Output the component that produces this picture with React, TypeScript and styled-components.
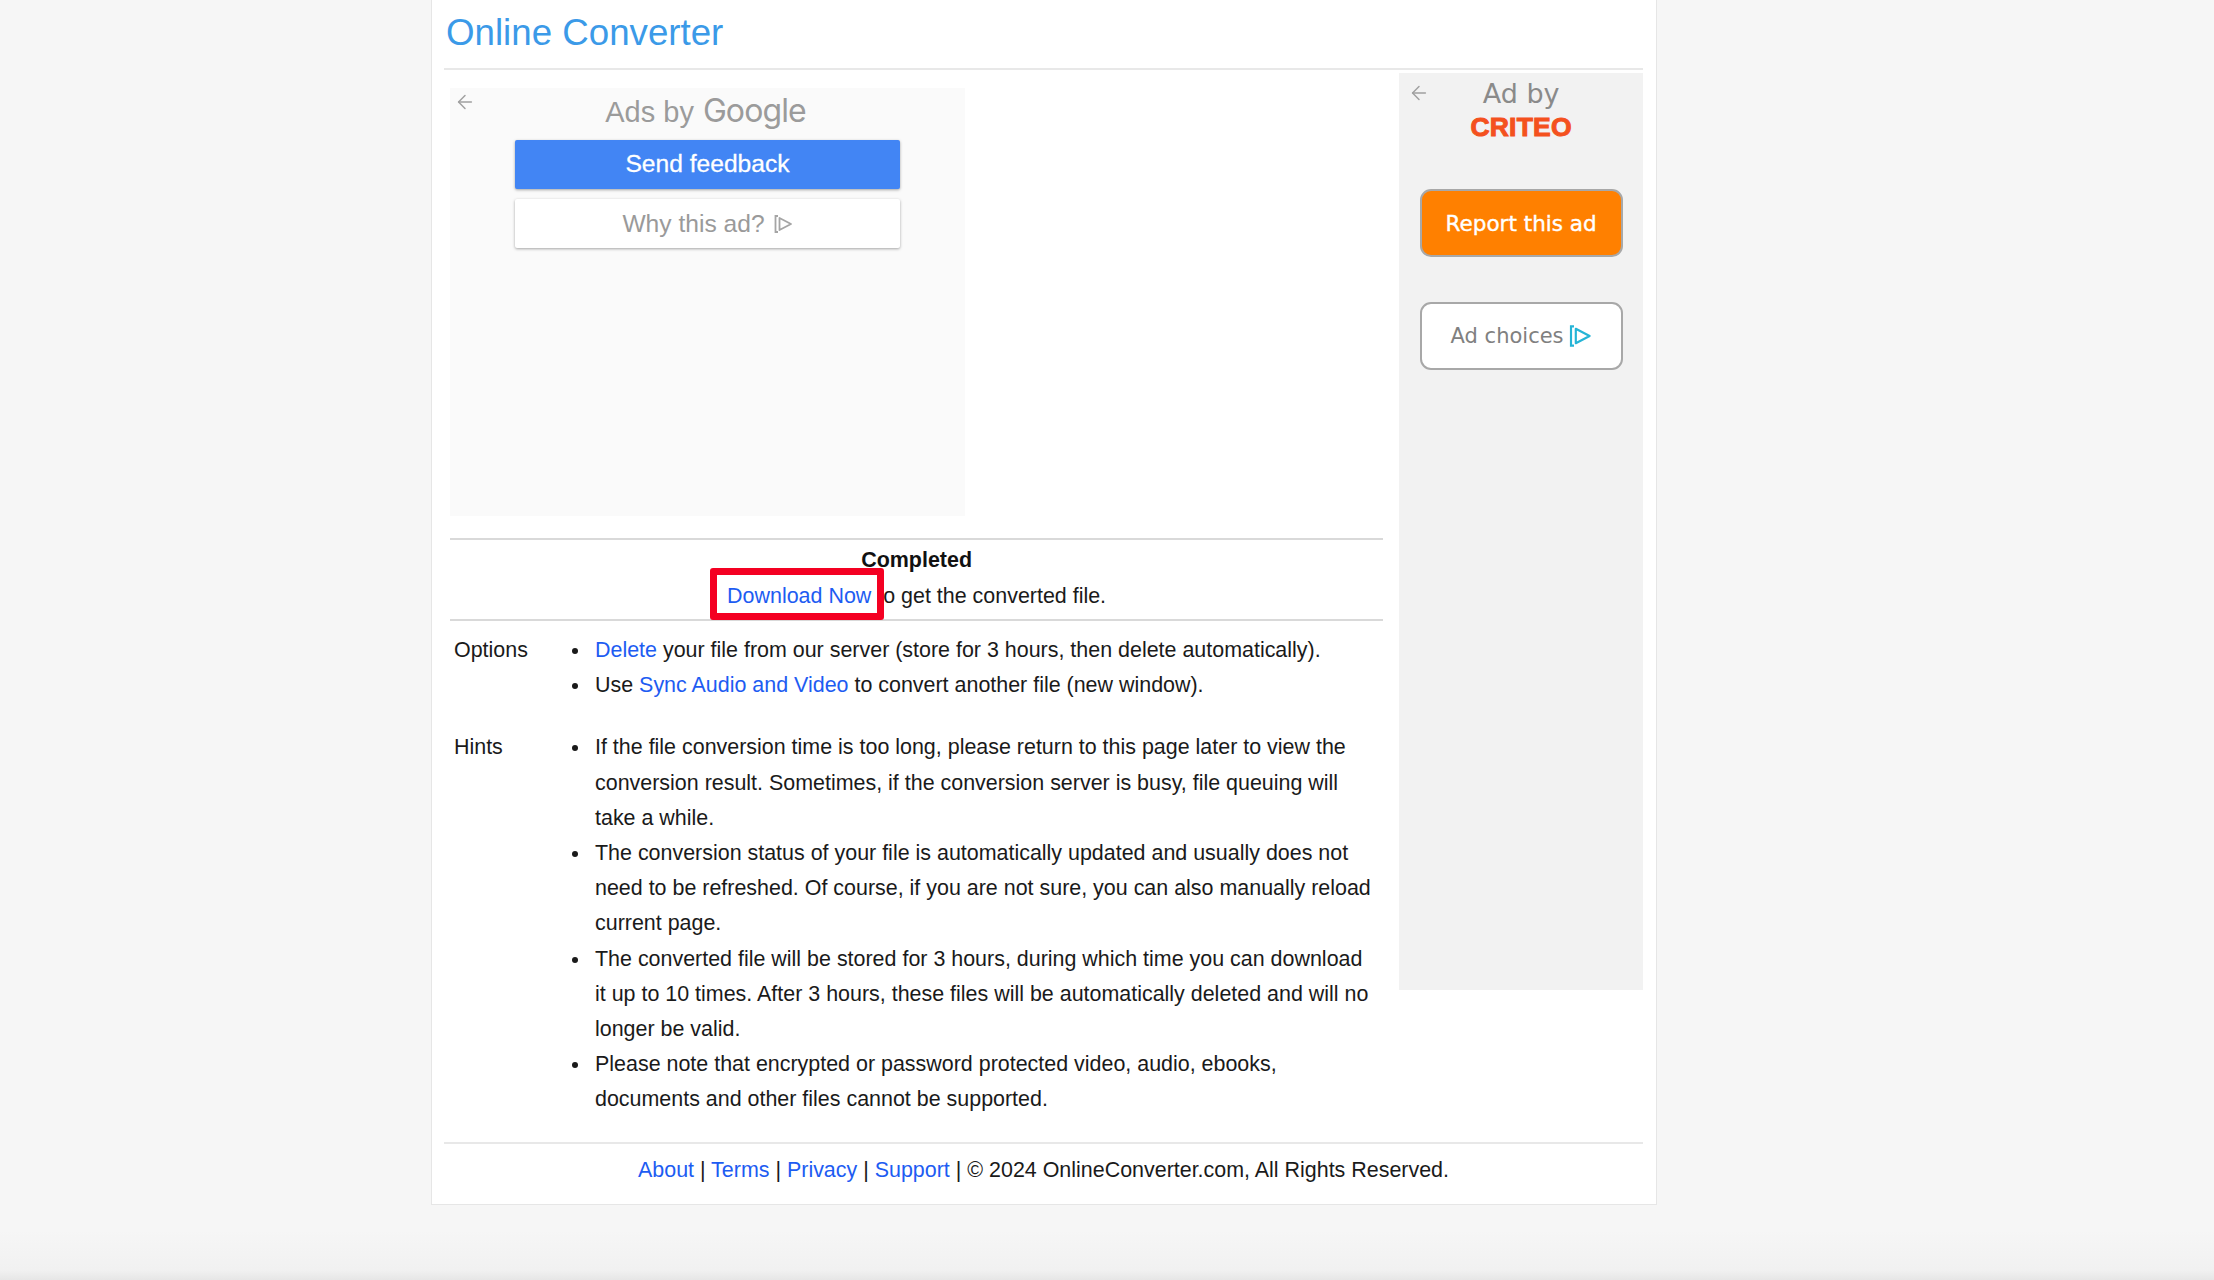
import * as React from "react";
import styled, { createGlobalStyle } from "styled-components";
import { ArrowLeft } from "lucide-react";

const GlobalStyle = createGlobalStyle`
  html, body {
    margin: 0;
    padding: 0;
  }
  body {
    height: 1280px;
    overflow: hidden;
    background: linear-gradient(#f6f6f6 0, #f6f6f6 1230px, #f1f1f1 1270px, #e6e6e6 1280px);
    font-family: "Liberation Sans", Arial, sans-serif;
    color: #1a1a1a;
  }
  a {
    color: #1d5cf2;
    text-decoration: none;
  }
`;

const Card = styled.div`
  box-sizing: border-box;
  width: 1226px;
  height: 1205px;
  margin-left: 431px;
  padding: 0 13px 0 12px;
  background: #fff;
  border: 1px solid #e6e6e6;
  border-top: 0;
`;

const Header = styled.header`
  height: 68px;
  border-bottom: 2px solid #e8e8e8;
`;

const Title = styled.h1`
  margin: 0;
  padding: 12px 0 0 2px;
  font-size: 36.7px;
  line-height: 42px;
  font-weight: 400;
  color: #3b9ae8;
`;

const Columns = styled.div`
  display: flex;
  align-items: flex-start;
  gap: 16px;
  padding-left: 6px;
  height: 1072px;
`;

const Main = styled.main`
  width: 934px;
  padding-top: 18px;
`;

const GoogleAd = styled.section`
  position: relative;
  box-sizing: border-box;
  width: 515px;
  height: 428px;
  padding-top: 4px;
  background: #fafafa;
  display: flex;
  flex-direction: column;
  align-items: center;
`;

const BackIcon = styled(ArrowLeft)`
  position: absolute;
  top: 3px;
  left: 4px;
  color: #a0a0a0;
`;

const SideBackIcon = styled(BackIcon)`
  top: 9px;
  left: 9px;
`;

const AdsBy = styled.div`
  display: flex;
  align-items: baseline;
  gap: 9px;
  height: 48px;
  margin-right: 4px;
  font-size: 29px;
  line-height: 38px;
  color: #9b9b9b;
`;

const GoogleWord = styled.span`
  font-family: Inter, sans-serif;
  font-size: 32px;
  font-weight: 400;
  letter-spacing: -0.9px;
`;

const FeedbackButton = styled.div`
  width: 385px;
  height: 49px;
  border-radius: 2px;
  background: #4285f4;
  box-shadow: 0 1px 3px rgba(0, 0, 0, 0.35);
  color: #fff;
  font-size: 24.6px;
  line-height: 48px;
  text-align: center;
  -webkit-text-stroke: 0.3px #fff;
`;

const WhyButton = styled.div`
  display: flex;
  align-items: center;
  justify-content: center;
  gap: 8px;
  width: 385px;
  height: 49px;
  margin-top: 10px;
  border-radius: 2px;
  background: #fff;
  box-shadow: 0 1px 3px rgba(0, 0, 0, 0.35);
  color: #9a9a9a;
  font-size: 24.6px;
`;

const Status = styled.section`
  margin-top: 22px;
  height: 79px;
  border-top: 2px solid #d9d9d9;
  border-bottom: 2px solid #d9d9d9;
  text-align: center;
  font-size: 21.45px;
  line-height: 35px;
`;

const StatusTitle = styled.div`
  height: 36px;
  padding-top: 3px;
  box-sizing: content-box;
  font-weight: 700;
  color: #111;
`;

const Highlighted = styled.a`
  position: relative;
  &::after {
    content: "";
    position: absolute;
    left: -17px;
    right: -13px;
    top: -16px;
    bottom: -12px;
    border: 7px solid #f40022;
    border-radius: 3px;
  }
`;

const InfoRow = styled.div<{ $gap?: number }>`
  display: flex;
  margin-top: ${(p) => p.$gap || 0}px;
  font-size: 21.45px;
  line-height: 35.2px;
`;

const InfoLabel = styled.div`
  width: 137px;
  padding-left: 4px;
  flex-shrink: 0;
`;

const InfoList = styled.ul`
  margin: 0;
  padding: 0 9px 0 0;
  list-style: disc;
  flex: 1;
  li {
    padding-left: 4px;
  }
`;

const Sidebar = styled.aside`
  position: relative;
  box-sizing: border-box;
  width: 244px;
  height: 917px;
  margin-top: 3px;
  padding-top: 3px;
  background: #f2f2f2;
  display: flex;
  flex-direction: column;
  align-items: center;
  font-family: "DejaVu Sans", sans-serif;
`;

const AdBy = styled.div`
  font-size: 27px;
  line-height: 36px;
  color: #8a8a8a;
`;

const Criteo = styled.div`
  margin-top: 3px;
  font-family: "Liberation Sans", sans-serif;
  font-weight: 700;
  font-size: 26.5px;
  line-height: 24px;
  letter-spacing: 0.2px;
  color: #f4511e;
  -webkit-text-stroke: 1px #f4511e;
`;

const SideButton = styled.div<{ $accent?: boolean }>`
  box-sizing: border-box;
  display: flex;
  align-items: center;
  justify-content: center;
  gap: 4px;
  width: 203px;
  height: 68px;
  margin-top: ${(p) => (p.$accent ? 50 : 45)}px;
  border: 2px solid #a8a8a8;
  border-radius: 11px;
  background: ${(p) => (p.$accent ? "#ff8000" : "#fff")};
  color: ${(p) => (p.$accent ? "#fff" : "#808080")};
  font-size: ${(p) => (p.$accent ? 21.5 : 21)}px;
  -webkit-text-stroke: ${(p) => (p.$accent ? "0.4px #fff" : "0")};
`;

const Footer = styled.footer`
  border-top: 2px solid #e8e8e8;
  padding-top: 9px;
  text-align: center;
  font-size: 21.45px;
  line-height: 35px;
`;

const PlayMark = ({ color, size }: { color: string; size: number }) => (
  <svg width={size} height={size} viewBox="0 0 20 20" fill="none" stroke={color} strokeWidth="1.8">
    <path d="M5 2H2.5v16H5" />
    <path d="M6.5 4l11.5 6-11.5 6z" strokeLinejoin="round" />
  </svg>
);

const App = () => {
  return (
    <>
      <GlobalStyle />
      <Card>
        <Header>
          <Title>Online Converter</Title>
        </Header>
        <Columns>
          <Main>
            <GoogleAd>
              <BackIcon size={22} strokeWidth={1.6} />
              <AdsBy>
                Ads by <GoogleWord>Google</GoogleWord>
              </AdsBy>
              <FeedbackButton>Send feedback</FeedbackButton>
              <WhyButton>
                Why this ad? <PlayMark color="#a5a5a5" size={20} />
              </WhyButton>
            </GoogleAd>
            <Status>
              <StatusTitle>Completed</StatusTitle>
              <div>
                <Highlighted href="#">Download Now</Highlighted> to get the converted file.
              </div>
            </Status>
            <InfoRow $gap={12}>
              <InfoLabel>Options</InfoLabel>
              <InfoList>
                <li>
                  <a href="#">Delete</a> your file from our server (store for 3 hours, then delete automatically).
                </li>
                <li>
                  Use <a href="#">Sync Audio and Video</a> to convert another file (new window).
                </li>
              </InfoList>
            </InfoRow>
            <InfoRow $gap={27}>
              <InfoLabel>Hints</InfoLabel>
              <InfoList>
                <li>
                  If the file conversion time is too long, please return to this page later to view the conversion
                  result. Sometimes, if the conversion server is busy, file queuing will take a while.
                </li>
                <li>
                  The conversion status of your file is automatically updated and usually does not need to be
                  refreshed. Of course, if you are not sure, you can also manually reload current page.
                </li>
                <li>
                  The converted file will be stored for 3 hours, during which time you can download it up to 10 times.
                  After 3 hours, these files will be automatically deleted and will no longer be valid.
                </li>
                <li>
                  Please note that encrypted or password protected video, audio, ebooks, documents and other files
                  cannot be supported.
                </li>
              </InfoList>
            </InfoRow>
          </Main>
          <Sidebar>
            <SideBackIcon size={22} strokeWidth={1.6} />
            <AdBy>Ad by</AdBy>
            <Criteo>CRITEO</Criteo>
            <SideButton $accent>Report this ad</SideButton>
            <SideButton>
              Ad choices <PlayMark color="#25b4d6" size={24} />
            </SideButton>
          </Sidebar>
        </Columns>
        <Footer>
          <a href="#">About</a> | <a href="#">Terms</a> | <a href="#">Privacy</a> | <a href="#">Support</a> | © 2024
          OnlineConverter.com, All Rights Reserved.
        </Footer>
      </Card>
    </>
  );
};

export default App;
